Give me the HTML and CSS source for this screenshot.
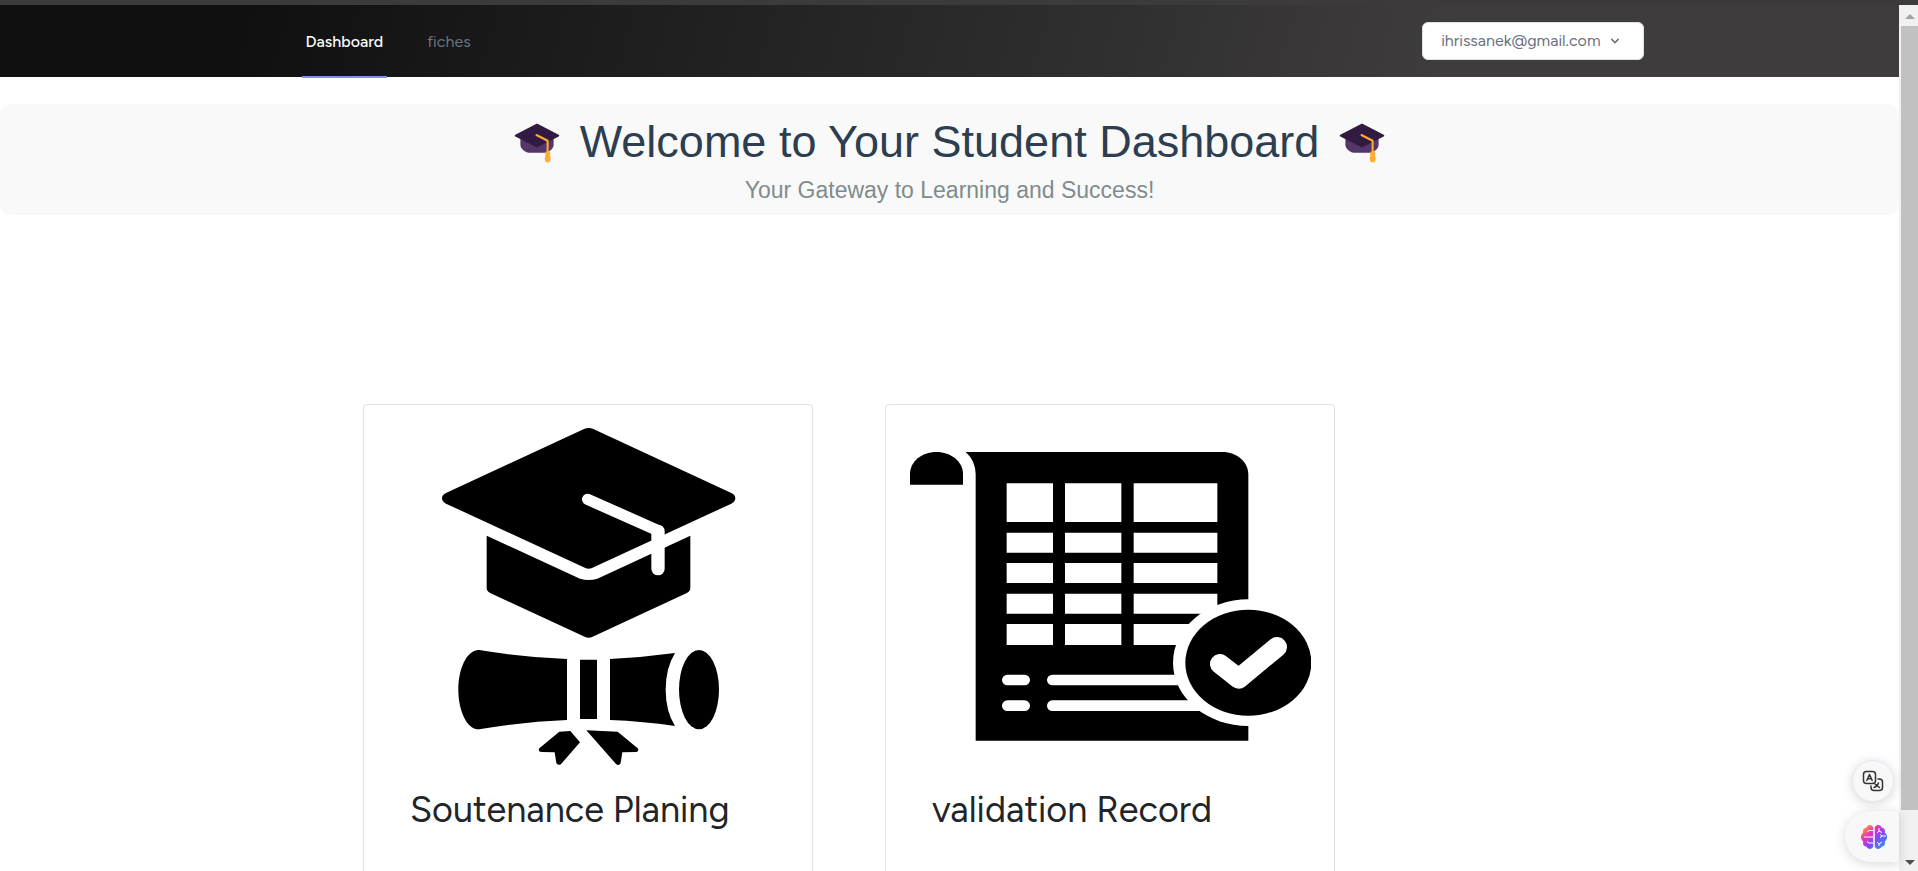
FILE: index.html
```html
<!DOCTYPE html>
<html lang="en">
<head>
<meta charset="utf-8">
<title>Dashboard</title>
<link rel="stylesheet" href="styles.css">
</head>
<body>
<svg class="defs" width="0" height="0" aria-hidden="true">
  <symbol id="cap-emoji" viewBox="0 0 36 36">
    <path fill="#543669" d="M5 15v5c0 3.500 3.500 6.500 8 6.500h10c4.500 0 8-3 8-6.500v-5z"/>
    <path fill="#321b41" stroke="#321b41" stroke-width="1.600" stroke-linejoin="round" d="M18 4.500 34.600 13 18 21.300 1.400 13z"/>
    <path fill="none" stroke="#ffac33" stroke-width="1.600" stroke-linecap="round" stroke-linejoin="round" d="M17.600 12.500 26.300 17v10"/>
    <path fill="#ffac33" d="M25 25.500h2.800c.8 1 .8 2.300.3 3.200 1 1.200 1 5.300-1.700 5.300s-2.700-4.100-1.700-5.300c-.5-.9-.5-2.200.3-3.200z"/>
  </symbol>
</svg>
<div class="window-edge"></div>
<div class="viewport">
  <div class="page">
    <header class="nav">
      <div class="nav-inner">
        <nav class="links">
          <a class="link active" href="#">Dashboard</a>
          <a class="link" href="#">fiches</a>
        </nav>
        <button class="account" type="button">ihrissanek@gmail.com
          <svg width="16" height="16" viewBox="0 0 20 20" fill="currentColor" aria-hidden="true"><path d="M5.293 7.293a1 1 0 011.414 0L10 10.586l3.293-3.293a1 1 0 111.414 1.414l-4 4a1 1 0 01-1.414 0l-4-4a1 1 0 010-1.414z"/></svg>
        </button>
      </div>
    </header>
    <section class="welcome">
      <h1 class="welcome-title"><svg class="emoji"><use href="#cap-emoji"/></svg><span>Welcome to Your Student Dashboard</span><svg class="emoji"><use href="#cap-emoji"/></svg></h1>
      <p class="welcome-sub">Your Gateway to Learning and Success!</p>
    </section>
    <main class="cards">
      <article class="card">
        <svg class="card-image" viewBox="111 114 1206 1011" role="img" aria-label="Graduation cap and diploma">
          <path d="M702 117q14-6 28 0l414 192q12 6 12 16t-12 16L726 534q-10 5-20 0L288 341q-12-6-12-16t12-16z"/>
          <path d="M410 437 690 566q26 8 52 0L1021 437V594q0 10-12 16L728 740q-12 6-24 0L422 610q-12-6-12-16z"/>
          <path fill="none" stroke="#fff" stroke-linecap="round" stroke-linejoin="round" stroke-width="34" d="M713 328 924 422"/>
          <path fill="none" stroke="#fff" stroke-linecap="round" stroke-linejoin="round" stroke-width="40" d="M924 424V536"/>
          <path d="M388 780Q520 802 651 807V990Q520 995 388 1018C350 1020 325 960 325 899S350 778 388 780z"/>
          <path d="M690 809H741V987H690zM780 807Q880 802 975 789 947 835 947 899T975 1008Q880 994 780 990z"/>
          <ellipse cx="1047" cy="899" rx="60" ry="119"/>
          <path d="M628 1025 661 1023 690 1057 634 1121q-8 8-15-2L614 1087 573 1086q-10-3-5-11zM709 1021 803 1025 863 1075q5 8-4 11L817 1087 812 1119q-5 10-14 3z"/>
        </svg>
        <h2 class="card-title">Soutenance Planing</h2>
      </article>
      <article class="card">
        <svg class="card-image" viewBox="117 114 1206 1011" role="img" aria-label="Record sheet with check mark">
          <path d="M120 284V252C120 215 155 186 199 186S279 215 279 252V284z"/>
          <path d="M287 186H1058C1100 186 1135 216 1135 252V1052H317V252Q316 212 287 186z"/>
          <path fill="#fff" d="M410 280H549V396H410zM585 280H754V396H585zM791 280H1042V396H791zM410 428H549V488H410zM585 428H754V488H585zM791 428H1042V488H791zM410 519H549V579H410zM585 519H754V579H585zM791 519H1042V579H791zM410 611H549V671H410zM585 611H754V671H585zM791 611H1042V671H791zM410 702H549V765H410zM585 702H754V765H585zM791 702H1042V765H791z"/>
          <path fill="none" stroke="#fff" stroke-width="32" stroke-linecap="round" d="M412 870H464M412 947H464M547 870H1000M547 947H1030"/>
          <ellipse fill="#fff" cx="1135" cy="818" rx="226" ry="190"/>
          <ellipse cx="1135" cy="818" rx="189" ry="159"/>
          <path fill="none" stroke="#fff" stroke-width="60" stroke-linecap="round" stroke-linejoin="round" d="M1050 822 1106 866 1221 771"/>
        </svg>
        <h2 class="card-title">validation Record</h2>
      </article>
    </main>
    <div class="floating">
      <button class="translate" type="button" aria-label="Translate">
        <svg width="22" height="22" viewBox="0 0 22 22" fill="none" stroke="#333" stroke-width="1.500" stroke-linecap="round" stroke-linejoin="round"><rect x="1.500" y="1.500" width="12" height="12" rx="3"/><path d="M4.800 10.500 7.500 4.500l2.700 6M5.800 8.800h3.400M16 9h1.500a3 3 0 0 1 3 3v5.500a3 3 0 0 1-3 3H12a3 3 0 0 1-3-3V16M12 17.500q3.500-1 4.500-4.500M13 14l4.500 3.500"/></svg>
      </button>
      <button class="brain" type="button" aria-label="Assistant">
        <svg width="28" height="26" viewBox="0 0 28 26"><defs><linearGradient id="brain-fill" x1="0" y1="0" x2="1" y2="1"><stop offset="0.100" stop-color="#ff9a1f"/><stop offset=".35" stop-color="#e832c0"/><stop offset=".6" stop-color="#7a4df5"/><stop offset="1" stop-color="#1fa0ff"/></linearGradient></defs>
        <path fill="url(#brain-fill)" d="M13.200 3.500C12 .2 7.500.2 6.500 3.500 3.500 4 2.500 6.500 3.200 8.500.2 10.500.2 15.500 3.200 17.500 2.500 20.500 4 22.500 6.500 22.800c1.500 3 5.700 2.800 6.700-.3zM14.800 3.500c1.200-3.300 5.700-3.300 6.700 0 3 .5 4 3 3.300 5 3 2 3 7 0 9 .7 3-.8 5-3.300 5.300-1.500 3-5.700 2.800-6.700-.3z"/>
        <path fill="none" stroke="#fff" stroke-width="1" d="M13 6.500H9L7 8M13 13H4M13 19H9L7 17.500M19 4v3l-2 2M19 7l3 1.500M26 12h-4l-2 2M22 12l-2-1.500M19 22v-2l-2-2M19 20l3-2"/></svg>
      </button>
    </div>
  </div>
  <div class="scrollbar" aria-hidden="true"><span class="arrow up"></span><span class="thumb"></span><span class="arrow down"></span></div>
</div>
</body>
</html>
```
FILE: styles.css
```css
* { box-sizing: border-box; }

body {
  margin: 0;
  height: 100vh;
  overflow: hidden;
  display: flex;
  flex-direction: column;
  background: #fff;
  color: #212529;
  font-family: Figtree, Roboto, sans-serif;
}

.defs { position: absolute; }

.window-edge { flex: none; height: 5px; background: #3b3b3b; }

.viewport { flex: 1; display: flex; min-height: 0; }

.page { flex: 1; min-width: 0; overflow: hidden; }

.nav { background: linear-gradient(105deg, #101010 13%, #2b2b2b 52%, #3f3c3d 76%); }

.nav-inner {
  display: flex;
  align-items: center;
  justify-content: space-between;
  max-width: 1388px;
  height: 72px;
  margin: 0 auto;
}

.links { display: flex; gap: 36px; height: 73px; margin: 0 0 -1px 46px; }

.link {
  display: flex;
  align-items: center;
  padding: 2px 4px 0;
  border-bottom: 2px solid transparent;
  color: #6b7280;
  font-size: 16px;
  font-weight: 400;
  text-decoration: none;
}

.link.active { border-color: #818cf8; color: #fff; font-weight: 500; }

.account {
  display: flex;
  align-items: center;
  gap: 6px;
  height: 38px;
  padding: 0 20px 1px 18px;
  border: 1px solid #dee2e6;
  border-radius: 6px;
  background: #fff;
  color: #6b7280;
  font: 400 16px Figtree, Roboto, sans-serif;
}

.welcome {
  margin-top: 27px;
  padding: 11px 0 10px;
  border-radius: 10px;
  background: #f9f9f9;
  text-align: center;
  font-family: "Liberation Sans", Arial, sans-serif;
}

.welcome-title {
  display: flex;
  align-items: center;
  justify-content: center;
  gap: 20px;
  margin: 0;
  color: #2c3e50;
  font-size: 45px;
  font-weight: 400;
  line-height: 54px;
}

.emoji { width: 46px; height: 46px; }

.welcome-sub { margin: 6px 0 0; color: #7f8c8d; font-size: 23px; line-height: 30px; }

.cards { display: flex; gap: 72px; margin: 189px 0 0 363px; }

.card {
  width: 450px;
  height: 560px;
  padding: 23px;
  border: 1px solid #dee2e6;
  border-radius: 4px;
}

.card-image { display: block; width: 100%; }

.card-title { margin: 23px 23px 0; font-size: 36px; font-weight: 400; line-height: 44px; }

.floating {
  position: fixed;
  right: 19px;
  bottom: 9px;
  display: flex;
  flex-direction: column;
  align-items: flex-end;
  gap: 9px;
}

.translate, .brain {
  display: flex;
  align-items: center;
  border: 0;
  padding: 0;
  background: #f8f8f9;
  box-shadow: 0 2px 12px rgba(0, 0, 0, 0.16);
}

.translate {
  justify-content: center;
  width: 42px;
  height: 42px;
  margin-right: 5px;
  border: 1px solid #e6e6f2;
  border-radius: 50%;
}

.brain { width: 54px; height: 51px; padding-left: 15px; border-radius: 26px 0 0 26px; }

.scrollbar {
  flex: none;
  display: flex;
  flex-direction: column;
  align-items: center;
  width: 19px;
  padding: 9px 0 6px 2px;
  background: #f1f1f1;
}

.arrow { border: 5px solid transparent; }
.up { border-top: 0; border-bottom-color: #a3a3a3; }
.down { border-bottom: 0; border-top-color: #505050; }
.thumb { width: 17px; height: 784px; margin: 7px 0 auto; background: #c1c1c1; }
```
